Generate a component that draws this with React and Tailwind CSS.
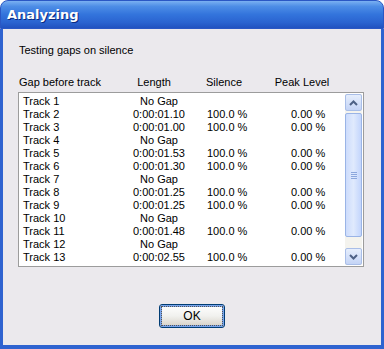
import React from 'react';

const rows = [
  ['Track 1', 'No Gap', '', ''],
  ['Track 2', '0:00:01.10', '100.0 %', '0.00 %'],
  ['Track 3', '0:00:01.00', '100.0 %', '0.00 %'],
  ['Track 4', 'No Gap', '', ''],
  ['Track 5', '0:00:01.53', '100.0 %', '0.00 %'],
  ['Track 6', '0:00:01.30', '100.0 %', '0.00 %'],
  ['Track 7', 'No Gap', '', ''],
  ['Track 8', '0:00:01.25', '100.0 %', '0.00 %'],
  ['Track 9', '0:00:01.25', '100.0 %', '0.00 %'],
  ['Track 10', 'No Gap', '', ''],
  ['Track 11', '0:00:01.48', '100.0 %', '0.00 %'],
  ['Track 12', 'No Gap', '', ''],
  ['Track 13', '0:00:02.55', '100.0 %', '0.00 %'],
];

const Arrow = ({ up }) => (
  <svg width="9" height="6" viewBox="0 0 9 6">
    <path d={up ? 'M1 5 L4.5 1.5 L8 5' : 'M1 1 L4.5 4.5 L8 1'} fill="none" stroke="#4d6185" strokeWidth="2" />
  </svg>
);

export default function App() {
  return (
    <div className="w-[384px] h-[349px] flex flex-col font-['Liberation_Sans',sans-serif] text-[11px] text-black">
      <div className="h-[29px] rounded-t-[8px] bg-[linear-gradient(to_bottom,#7ab0f2_0%,#4d8de6_20%,#3374dc_50%,#2a63d0_80%,#2152c0_100%)] border border-[#2a57c4] flex items-center px-[6px]">
        <span className="text-white font-bold text-[13px] font-['DejaVu_Sans',sans-serif] [text-shadow:1px_1px_0_#0a2a80]">Analyzing</span>
      </div>
      <div className="flex-1 bg-[#ebe9ed] border-x-[3px] border-b-[4px] border-[#2f63d0] flex flex-col">
        <div className="pl-[16px] pt-[13px] h-[44px]">Testing gaps on silence</div>
        <div className="flex h-[19px] items-center pl-[16px]">
          <span className="w-[100px]">Gap before track</span>
          <span className="w-[70px] text-center">Length</span>
          <span className="w-[70px] text-center">Silence</span>
          <span className="w-[86px] text-center">Peak Level</span>
        </div>
        <div className="ml-[15px] w-[346px] h-[175px] bg-white border border-[#9c9c9c] flex">
          <div className="flex-1 pt-[2px] pl-[4px]">
            {rows.map((r) => (
              <div key={r[0]} className="flex h-[13px] items-center leading-none">
                <span className="w-[92px]">{r[0]}</span>
                <span className="w-[88px] text-center">{r[1]}</span>
                <span className="w-[88px] pl-[4px]">{r[2]}</span>
                <span className="w-[50px]">{r[3]}</span>
              </div>
            ))}
          </div>
          <div className="w-[17px] my-[1px] mr-[1px] bg-[#f4f3ee] flex flex-col">
            <div className="h-[17px] rounded-[2px] border border-[#a9bee8] bg-gradient-to-b from-[#e6eefc] to-[#c4d4f6] flex items-center justify-center">
              <Arrow up />
            </div>
            <div className="mt-[2px] h-[124px] rounded-[2px] border border-[#9ab4e6] bg-gradient-to-r from-[#cddcfc] via-[#e0eafd] to-[#c3d5fc] flex items-center justify-center">
              <div className="flex flex-col gap-[1px]">
                <div className="w-[6px] h-[1px] bg-[#8ca7dc]" />
                <div className="w-[6px] h-[1px] bg-[#8ca7dc]" />
                <div className="w-[6px] h-[1px] bg-[#8ca7dc]" />
                <div className="w-[6px] h-[1px] bg-[#8ca7dc]" />
              </div>
            </div>
            <div className="flex-1" />
            <div className="h-[17px] rounded-[2px] border border-[#a9bee8] bg-gradient-to-b from-[#e6eefc] to-[#c4d4f6] flex items-center justify-center">
              <Arrow />
            </div>
          </div>
        </div>
        <div className="flex justify-center pt-[37px]">
          <button className="w-[66px] h-[24px] rounded-[3px] border border-[#003c74] bg-gradient-to-b from-[#ffffff] via-[#f1f1ee] to-[#d6d0c5] shadow-[inset_0_0_0_2px_#79a4ea] flex items-center justify-center text-[12px]">
            <span className="outline outline-1 outline-dotted outline-[#555] px-[21px]">OK</span>
          </button>
        </div>
      </div>
    </div>
  );
}
